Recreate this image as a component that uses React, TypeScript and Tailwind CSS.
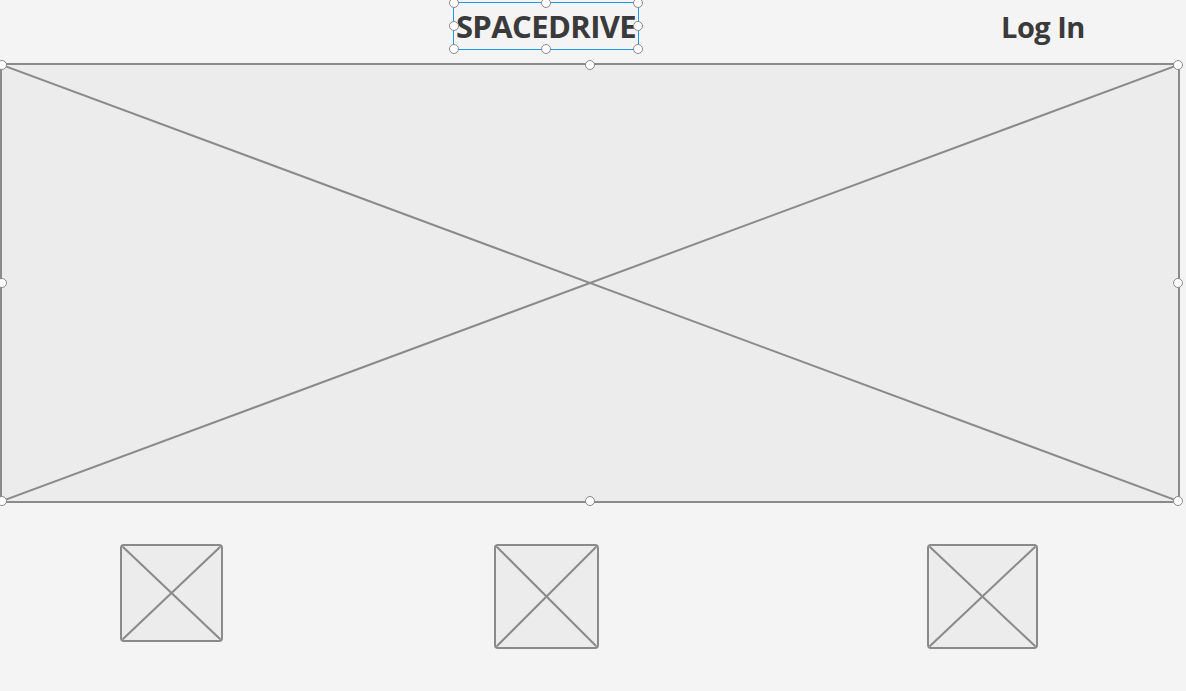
function Handle({ className }: { className: string }) {
  return (
    <span
      className={`absolute h-[10px] w-[10px] -translate-x-1/2 -translate-y-1/2 rounded-full border border-[#8a8a8a] bg-white ${className}`}
    />
  );
}

function Cross({ stroke = 2 }: { stroke?: number }) {
  return (
    <svg className="absolute inset-0 h-full w-full" preserveAspectRatio="none" viewBox="0 0 100 100">
      <line x1="0" y1="0" x2="100" y2="100" stroke="#8a8a8a" strokeWidth={stroke} vectorEffect="non-scaling-stroke" />
      <line x1="100" y1="0" x2="0" y2="100" stroke="#8a8a8a" strokeWidth={stroke} vectorEffect="non-scaling-stroke" />
    </svg>
  );
}

function Thumb({ className }: { className: string }) {
  return (
    <div className={`relative overflow-hidden rounded-[4px] border-2 border-[#8a8a8a] bg-[#ececec] ${className}`}>
      <Cross />
    </div>
  );
}

export default function App() {
  return (
    <div
      className="relative h-[691px] w-[1186px] overflow-hidden bg-[#f4f4f4]"
      style={{ fontFamily: '"Open Sans", "Liberation Sans", sans-serif' }}
    >
      {/* header */}
      <header className="flex h-[63px] items-start">
        <div className="relative ml-[453px] mt-[2px] flex h-[48px] w-[186px] items-center justify-center border border-[#1a9ae8]">
          <span className="text-[31px] font-bold tracking-[-0.6px] text-[#3a3a3a]">SPACEDRIVE</span>
          <Handle className="left-0 top-0" />
          <Handle className="left-1/2 top-0" />
          <Handle className="left-full top-0" />
          <Handle className="left-0 top-1/2" />
          <Handle className="left-full top-1/2" />
          <Handle className="left-0 top-full" />
          <Handle className="left-1/2 top-full" />
          <Handle className="left-full top-full" />
        </div>
        <span className="ml-[362px] mt-[5px] text-[29px] font-bold tracking-[-0.5px] text-[#3a3a3a]">Log In</span>
      </header>

      {/* hero placeholder */}
      <div className="relative h-[440px] w-[1180px] border-2 border-[#8a8a8a] bg-[#ececec]">
        <Cross />
        <Handle className="left-0 top-0" />
        <Handle className="left-1/2 top-0" />
        <Handle className="left-full top-0" />
        <Handle className="left-0 top-1/2" />
        <Handle className="left-full top-1/2" />
        <Handle className="left-0 top-full" />
        <Handle className="left-1/2 top-full" />
        <Handle className="left-full top-full" />
      </div>

      {/* thumbnails */}
      <div className="mt-[41px] flex items-start">
        <Thumb className="ml-[120px] h-[98px] w-[103px]" />
        <Thumb className="ml-[271px] h-[105px] w-[105px]" />
        <Thumb className="ml-[328px] h-[105px] w-[111px]" />
      </div>
    </div>
  );
}
